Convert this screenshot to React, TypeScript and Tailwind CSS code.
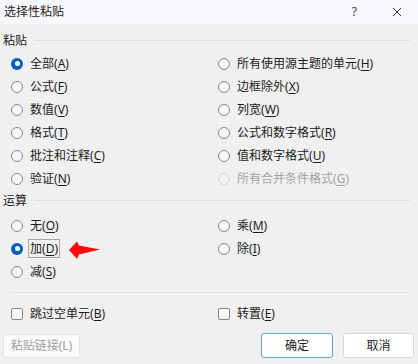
import React from 'react';

type Opt = { label: string; key: string; checked?: boolean; disabled?: boolean; focus?: boolean };

const pasteLeft: Opt[] = [
  { label: '全部', key: 'A', checked: true },
  { label: '公式', key: 'F' },
  { label: '数值', key: 'V' },
  { label: '格式', key: 'T' },
  { label: '批注和注释', key: 'C' },
  { label: '验证', key: 'N' },
];

const pasteRight: Opt[] = [
  { label: '所有使用源主题的单元', key: 'H' },
  { label: '边框除外', key: 'X' },
  { label: '列宽', key: 'W' },
  { label: '公式和数字格式', key: 'R' },
  { label: '值和数字格式', key: 'U' },
  { label: '所有合并条件格式', key: 'G', disabled: true },
];

const opLeft: Opt[] = [
  { label: '无', key: 'O' },
  { label: '加', key: 'D', checked: true, focus: true },
  { label: '减', key: 'S' },
];

const opRight: Opt[] = [
  { label: '乘', key: 'M' },
  { label: '除', key: 'I' },
];

const Label = ({ o }: { o: Opt }) => (
  <span>
    {o.label}(<span className="underline underline-offset-2">{o.key}</span>)
  </span>
);

const Radio = ({ o }: { o: Opt }) => (
  <div className="flex items-center h-[23px]">
    {o.checked ? (
      <span className="w-[12px] h-[12px] rounded-full bg-[#005fb8] flex items-center justify-center">
        <span className="w-[5px] h-[5px] rounded-full bg-white" />
      </span>
    ) : (
      <span
        className={
          o.disabled
            ? 'w-[12px] h-[12px] rounded-full border border-[#d4d4d4] bg-[#f3f3f3]'
            : 'w-[12px] h-[12px] rounded-full border border-[#878787] bg-[#f8f8f8]'
        }
      />
    )}
    <span
      className={
        (o.focus ? 'ml-[5px] px-[1px] border border-[#a6a6a6] leading-[17px] ' : 'ml-[7px] ') +
        (o.disabled ? 'text-[#a3a3a3]' : 'text-[#1b1b1b]')
      }
    >
      <Label o={o} />
    </span>
  </div>
);

const Heading = ({ text }: { text: string }) => (
  <div className="flex items-center h-[14px] pl-[3px] pr-[8px]">
    <span className="text-[#1b1b1b] text-[12px] leading-[14px]">{text}</span>
    <div className="flex-1 ml-[7px] h-px bg-[#dedede] -mt-[2px]" />
  </div>
);

const Check = ({ text, k }: { text: string; k: string }) => (
  <div className="flex items-center h-[23px]">
    <span className="w-[12px] h-[12px] rounded-[2px] border border-[#878787] bg-[#f8f8f8]" />
    <span className="ml-[7px] text-[#1b1b1b]">
      {text}(<span className="underline underline-offset-2">{k}</span>)
    </span>
  </div>
);

export default function App() {
  return (
    <div
      className="relative w-[418px] h-[364px] bg-[#f0f0f0] text-[12px] overflow-hidden"
      style={{ fontFamily: '"Segoe UI", "Noto Sans", "Noto Sans CJK SC", sans-serif' }}
    >
      {/* title bar */}
      <div className="h-[24px] bg-[#f7f8fb] flex items-center pl-[4px]">
        <span className="text-[12px] text-[#1b1b1b]">选择性粘贴</span>
        <span className="ml-auto text-[12px] text-[#444]">?</span>
        <svg className="ml-[35px] mr-[16px]" width="10" height="10" viewBox="0 0 10 10">
          <path d="M1 1L9 9M9 1L1 9" stroke="#333" strokeWidth="1" />
        </svg>
      </div>

      <div className="pt-[10px]">
        <Heading text="粘贴" />
      </div>
      <div className="grid grid-cols-[207px_1fr] pl-[11px] mt-[4px]">
        <div>
          {pasteLeft.map(o => <Radio key={o.key} o={o} />)}
        </div>
        <div>
          {pasteRight.map(o => <Radio key={o.key} o={o} />)}
        </div>
      </div>

      <div className="mt-[4px]">
        <Heading text="运算" />
      </div>
      <div className="grid grid-cols-[207px_1fr] pl-[11px] mt-[6px]">
        <div>
          {opLeft.map(o => <Radio key={o.key} o={o} />)}
        </div>
        <div>
          {opRight.map(o => <Radio key={o.key} o={o} />)}
        </div>
      </div>

      <div className="mt-[9px] mx-[10px] h-px bg-[#e2e2e2]" />

      <div className="grid grid-cols-[207px_1fr] pl-[11px] mt-[9px]">
        <Check text="跳过空单元" k="B" />
        <Check text="转置" k="E" />
      </div>

      <div className="flex items-center mt-[8px] px-[3px]">
        <button className="w-[77px] h-[24px] rounded-[3px] border border-[#e3e3e3] bg-[#fbfbfb] text-[#a0a0a0] text-[12px]">
          粘贴链接(L)
        </button>
        <button className="ml-auto w-[72px] h-[25px] rounded-[3px] border border-[#6aa3d8] bg-white text-[#1b1b1b] text-[12px]">
          确定
        </button>
        <button className="ml-[10px] mr-[1px] w-[71px] h-[25px] rounded-[3px] border border-[#d6d6d6] bg-white text-[#1b1b1b] text-[12px]">
          取消
        </button>
      </div>

      {/* red annotation arrow */}
      <svg className="absolute left-[66px] top-[238px]" width="38" height="24" viewBox="66 238 38 24">
        <path d="M69 250 L77 241.5 L79 245.5 L100 249.5 L79 254.5 L77 259 Z" fill="#f40c0c" />
      </svg>
    </div>
  );
}
